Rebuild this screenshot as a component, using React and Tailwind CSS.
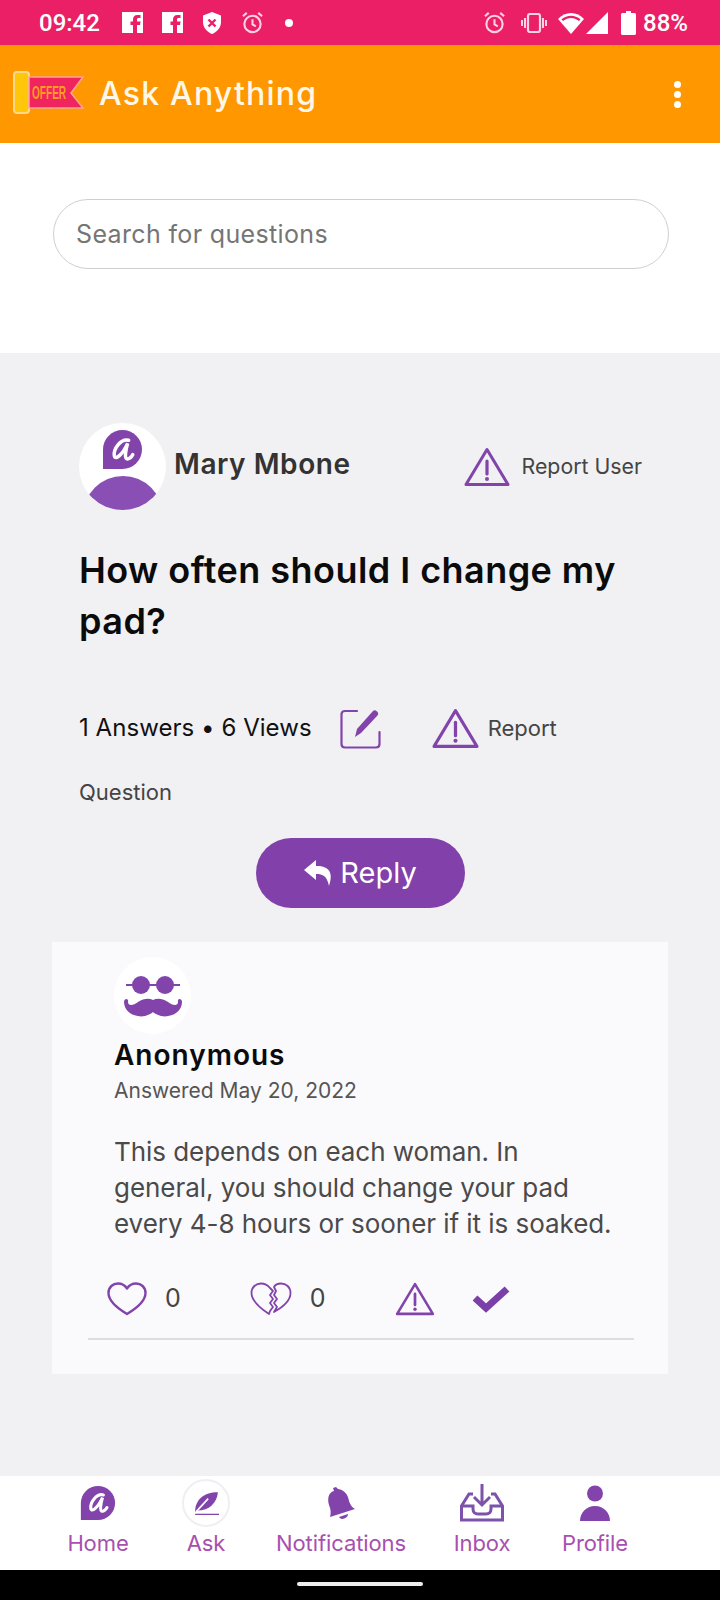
const P = "#8244ab";

function Warn({ className }) {
  return (
    <svg viewBox="0 0 46 40" className={className} fill="none">
      <path d="M23 2.500 L44 37.500 H2 Z" stroke={P} strokeWidth="3" strokeLinejoin="round" />
      <path d="M23 14 V27" stroke={P} strokeWidth="3.200" strokeLinecap="round" />
      <circle cx="23" cy="32" r="2" fill={P} />
    </svg>
  );
}

function LogoA({ className }) {
  return (
    <svg viewBox="0 0 40 40" className={className}>
      <path d="M20 1 A19 19 0 0 1 20 39 H1 V20 A19 19 0 0 1 20 1 Z" fill={P} />
      <path d="M26 11 C18 9 11 20 12 26 C13 31 20 25 25 14 C23 21 22 28 24 29 C26 30 29 27 30 25" fill="none" stroke="#fff" strokeWidth="3.400" strokeLinecap="round" />
    </svg>
  );
}

function Alarm() {
  return (
    <svg viewBox="0 0 24 24" className="w-[23px] h-[23px]" fill="none" stroke="#ffd3e1" strokeWidth="2.200">
      <circle cx="12" cy="13.500" r="8.500" />
      <path d="M12 8.500V14L15.500 16M2 5.500L6 2M22 5.500L18 2" />
    </svg>
  );
}

function StatusBar() {
  return (
    <div className="h-[45px] bg-[#eb1f66] flex items-center pl-[39px] pr-[32px] text-white font-['Roboto',sans-serif]">
      <span className="text-[24px] font-medium w-[64px] leading-none">09:42</span>
      <div className="flex items-center gap-[19px] ml-[19px]">
        {[0, 1].map((i) => (
          <svg key={i} viewBox="0 0 21 21" className="w-[21px] h-[21px]">
            <path fill="#fff" d="M0 0H21V21H15V13H18L18.500 9.500H15V7.500C15 6.500 15.500 6 16.500 6H18.500V3H15.500C12.500 3 11 4.800 11 7.500V9.500H8.500V13H11V21H0Z" />
          </svg>
        ))}
        <svg viewBox="0 0 20 24" className="w-[20px] h-[24px]">
          <path fill="#fff" d="M10 1 L19 4.500 V11 C19 16.500 15 21 10 23 C5 21 1 16.500 1 11 V4.500 Z" />
          <path stroke="#eb1f66" strokeWidth="2.400" d="M6.500 8.500 L13.500 15.500 M13.500 8.500 L6.500 15.500" />
        </svg>
        <Alarm />
      </div>
      <span className="w-[8px] h-[8px] rounded-full bg-white ml-[21px]" />
      <div className="ml-auto flex items-center">
        <Alarm />
        <svg viewBox="0 0 26 20" className="w-[26px] h-[20px] ml-[15px]" fill="#ffd3e1">
          <rect x="7" y="1" width="12" height="18" rx="2" fill="none" stroke="#ffd3e1" strokeWidth="2.200" />
          <rect x="3" y="5" width="2" height="10" />
          <rect x="0" y="7" width="2" height="6" />
          <rect x="21" y="5" width="2" height="10" />
          <rect x="24" y="7" width="2" height="6" />
        </svg>
        <svg viewBox="0 0 26 22" className="w-[26px] h-[22px] ml-[11px]">
          <path fill="#fff" d="M0 7 C7 -1 19 -1 26 7 L13 22 Z" />
          <path fill="#eb1f66" d="M3.500 7.300 C9 2.500 17 2.500 22.500 7.300 L21 9 C15.500 5 10.500 5 5 9 Z" />
        </svg>
        <svg viewBox="0 0 22 22" className="w-[22px] h-[22px] ml-[2px]">
          <path fill="#fff" d="M22 0V22H0Z" />
        </svg>
        <svg viewBox="0 0 15 24" className="w-[15px] h-[24px] ml-[13px]">
          <path fill="#fff" d="M5 0H10V2H13.500C14.300 2 15 2.700 15 3.500V22.500C15 23.300 14.300 24 13.500 24H1.500C.7 24 0 23.300 0 22.500V3.500C0 2.700.7 2 1.500 2H5Z" />
        </svg>
        <span className="text-[24px] font-medium leading-none ml-[7px]">88%</span>
      </div>
    </div>
  );
}

function Header() {
  return (
    <div className="h-[98px] bg-[#ff9800] flex items-center pl-[13px] pr-[39px]">
      <svg viewBox="0 0 72 44" className="w-[72px] h-[44px] mb-[3px]">
        <rect x="1" y="1" width="15" height="41" rx="3" fill="#ffc60a" stroke="#ffd98a" strokeWidth="2" />
        <path d="M16 6H70L58 22L70 37H16Z" fill="#f0245f" stroke="#ffa78a" strokeWidth="1.500" />
        <text transform="translate(19 28) scale(0.72 1.3)" fontFamily="Liberation Sans, sans-serif" fontWeight="700" fontSize="14" fill="#ff9d1e">OFFER</text>
      </svg>
      <span className="ml-[14px] text-[32px] font-medium text-[#fff7e8] tracking-[1.2px] font-['Inter',sans-serif]">Ask Anything</span>
      <div className="ml-auto flex flex-col gap-[3px]">
        <span className="w-[7px] h-[7px] rounded-full bg-white" />
        <span className="w-[7px] h-[7px] rounded-full bg-white" />
        <span className="w-[7px] h-[7px] rounded-full bg-white" />
      </div>
    </div>
  );
}

function Search() {
  return (
    <div className="h-[210px] bg-white pt-[56px] pl-[53px] pr-[51px]">
      <div className="h-[70px] border border-[#cfcfcf] rounded-full flex items-center pl-[22px] pt-[1px] text-[25px] tracking-[0.35px] text-[#757575]">
        Search for questions
      </div>
    </div>
  );
}

function Question() {
  return (
    <div className="px-[79px]">
      <div className="flex items-center">
        <div className="w-[87px] h-[87px] rounded-full bg-white overflow-hidden flex flex-col items-center shrink-0">
          <LogoA className="w-[41px] h-[41px] mt-[6px] shrink-0" />
          <div className="w-[80px] h-[80px] rounded-full bg-[#8a4fb5] mt-[6px] shrink-0" />
        </div>
        <span className="ml-[8px] mb-[6px] text-[28px] font-semibold text-[#333333] tracking-[0.55px]">Mary Mbone</span>
        <Warn className="w-[46px] h-[40px] ml-auto mr-[12px]" />
        <span className="text-[21.3px] text-[#444444] mr-[-1px]">Report User</span>
      </div>
      <h1 className="mt-[35px] text-[36px] leading-[51px] font-semibold text-[#0b0b0b] tracking-[0.45px]">
        How often should I change my pad?
      </h1>
      <div className="flex items-center mt-[60px]">
        <span className="text-[24px] text-[#111111] tracking-[0.05px]">1 Answers • 6 Views</span>
        <svg viewBox="0 0 42 42" className="w-[42px] h-[42px] ml-[28px]" fill="none">
          <path d="M17 4H5C3 4 1.500 5.500 1.500 7.500V37C1.500 39 3 40.500 5 40.500H36C38 40.500 39.500 39 39.500 37V25" stroke={P} strokeWidth="2.200" strokeLinecap="round" />
          <path d="M15 30L17 22L33 4C34 3 35.500 3 37 4.500C38.500 6 38.500 7 37.500 8.500L21 26Z" fill={P} />
        </svg>
        <Warn className="w-[47px] h-[41px] ml-[50px]" />
        <span className="ml-[9px] text-[22px] text-[#444444]">Report</span>
      </div>
      <div className="mt-[28px] text-[22px] leading-[30px] text-[#444444]">Question</div>
      <div className="flex justify-center mt-[31px] ml-[1px]">
        <div className="w-[209px] h-[70px] rounded-full bg-[#8140aa] flex items-center justify-center text-[29px] text-white">
          <svg viewBox="0 0 30 26" className="w-[30px] h-[26px] mr-[6px]" fill="#fff">
            <path d="M12 0L0 10L12 20V14C19 14 23 16 25 26C29 14 27 6 12 6Z" />
          </svg>
          Reply
        </div>
      </div>
    </div>
  );
}

function Card() {
  return (
    <div className="mt-[34px] mx-[52px] h-[432px] bg-[#faf9fc] pt-[15px] pl-[62px] pr-[34px]">
      <div className="w-[77px] h-[77px] rounded-full bg-white flex items-center justify-center">
        <svg viewBox="0 0 60 42" className="w-[60px] h-[42px]">
          <circle cx="18" cy="10" r="9" fill={P} />
          <circle cx="42" cy="10" r="9" fill={P} />
          <path d="M3 10H57" stroke={P} strokeWidth="1.800" />
          <path d="M1 27C1 23 6 23 5 27C5 31 10 31 15 27C21 23 26 23 30 25C34 23 39 23 45 27C50 31 55 31 55 27C54 23 59 23 59 27C59 37 48 43 38 41C34 40 31 38 30 37C29 38 26 40 22 41C12 43 1 37 1 27Z" fill={P} />
        </svg>
      </div>
      <div className="mt-[3px] text-[28px] leading-[36px] font-semibold text-[#0b0b0b] tracking-[1px]">Anonymous</div>
      <div className="mt-[2px] text-[21px] leading-[32px] text-[#555555]">Answered May 20, 2022</div>
      <p className="mt-[27px] max-w-[498px] text-[26px] leading-[36px] text-[#4a4a4a] tracking-[-0.05px]">
        This depends on each woman. In general, you should change your pad every 4-8 hours or sooner if it is soaked.
      </p>
      <div className="flex items-center mt-[36px] ml-[-7px] h-[42px]">
        <svg viewBox="0 0 40 34" className="w-[40px] h-[34px]" fill="none">
          <path d="M20 32C10 26 1.500 19 1.500 11C1.500 5 6 1.500 11 1.500C15 1.500 18 3.500 20 6.500C22 3.500 25 1.500 29 1.500C34 1.500 38.500 5 38.500 11C38.500 19 30 26 20 32Z" stroke={P} strokeWidth="2.400" strokeLinejoin="round" />
        </svg>
        <span className="ml-[18px] text-[25px] text-[#444444]">0</span>
        <svg viewBox="0 0 42 34" className="w-[42px] h-[34px] ml-[69px]" fill="none">
          <path d="M19 32C10 26 1.500 19 1.500 11C1.500 5 6 1.500 11 1.500C15 1.500 18 3.500 20 6L23 9L20 13L23 17L20 21L23 25L20 29ZM24 30C33 25 40.500 19 40.500 11C40.500 5 36 1.500 31 1.500C28 1.500 25 3 24 5L26 9L24 13L27 17L24 21L27 25Z" stroke={P} strokeWidth="1.800" strokeLinejoin="round" />
        </svg>
        <span className="ml-[18px] text-[25px] text-[#444444]">0</span>
        <Warn className="w-[40px] h-[34px] ml-[69px]" />
        <svg viewBox="0 0 40 30" className="w-[40px] h-[30px] ml-[36px]" fill="none">
          <path d="M4 14L15 24L36 5" stroke="#7b3fa8" strokeWidth="7" />
        </svg>
      </div>
      <div className="h-[2px] bg-[#dddddd] mt-[18px] ml-[-26px]" />
    </div>
  );
}

function NavItem({ label, icon, className }) {
  return (
    <div className={"flex flex-col items-center " + className}>
      <div className="h-[46px] flex items-center justify-center">{icon}</div>
      <span className="mt-[2px] text-[22px] leading-[30px] text-[#a84fb0] tracking-[-0.1px]">{label}</span>
    </div>
  );
}

function Nav() {
  return (
    <div className="h-[94px] bg-white flex items-start pt-[4px]">
      <NavItem className="w-[64px] ml-[66px]" label="Home" icon={<LogoA className="w-[36px] h-[36px]" />} />
      <NavItem
        className="w-[40px] ml-[56px]"
        label="Ask"
        icon={
          <div className="w-[48px] h-[48px] rounded-full border-2 border-[#f0eef2] flex items-center justify-center shrink-0">
            <svg viewBox="0 0 24 24" className="w-[26px] h-[26px]" fill="none">
              <path d="M2 20C2 9 10 2 23 2C22 12 15 19 4 19Z" fill={P} />
              <path d="M3 20L14 8" stroke="#fff" strokeWidth="1.500" />
              <path d="M2 22.500H24" stroke={P} strokeWidth="1.200" />
            </svg>
          </div>
        }
      />
      <NavItem
        className="w-[132px] ml-[49px]"
        label="Notifications"
        icon={
          <svg viewBox="0 0 30 36" className="w-[30px] h-[36px]">
            <path d="M7 3L10 2L12 4C19 5 22 10 23 16C24 20 27 23 29 24L4 32C5 29 5 24 3 20C1 13 3 7 8 6Z" fill={P} />
            <path d="M13 32L22 29C22 33 15 36 13 32Z" fill={P} />
          </svg>
        }
      />
      <NavItem
        className="w-[60px] ml-[45px]"
        label="Inbox"
        icon={
          <svg viewBox="0 0 44 38" className="w-[44px] h-[38px]" fill="none" stroke="#7d52ab" strokeWidth="3">
            <path d="M13 10H9L1.500 22V36H42.500V22L35 10H31" />
            <path d="M1.500 22H13V25C13 28 15 30 18 30H26C29 30 31 28 31 25V22H42.500" />
            <path d="M22 0V20M14 13L22 21L30 13" />
          </svg>
        }
      />
      <NavItem
        className="w-[64px] ml-[51px]"
        label="Profile"
        icon={
          <svg viewBox="0 0 30 36" className="w-[30px] h-[36px]" fill={P}>
            <circle cx="15" cy="8.500" r="8" />
            <path d="M0 36C0 28 6 21 15 21C24 21 30 28 30 36Z" />
          </svg>
        }
      />
    </div>
  );
}

export default function App() {
  return (
    <div className="w-[720px] h-[1600px] overflow-hidden bg-[#f1f0f2] flex flex-col font-['Inter',sans-serif]">
      <StatusBar />
      <Header />
      <Search />
      <div className="flex-1 pt-[70px]">
        <Question />
        <Card />
      </div>
      <Nav />
      <div className="h-[30px] bg-black flex justify-center pt-[12px]">
        <div className="w-[126px] h-[4px] rounded-full bg-[#eeeeee]" />
      </div>
    </div>
  );
}
